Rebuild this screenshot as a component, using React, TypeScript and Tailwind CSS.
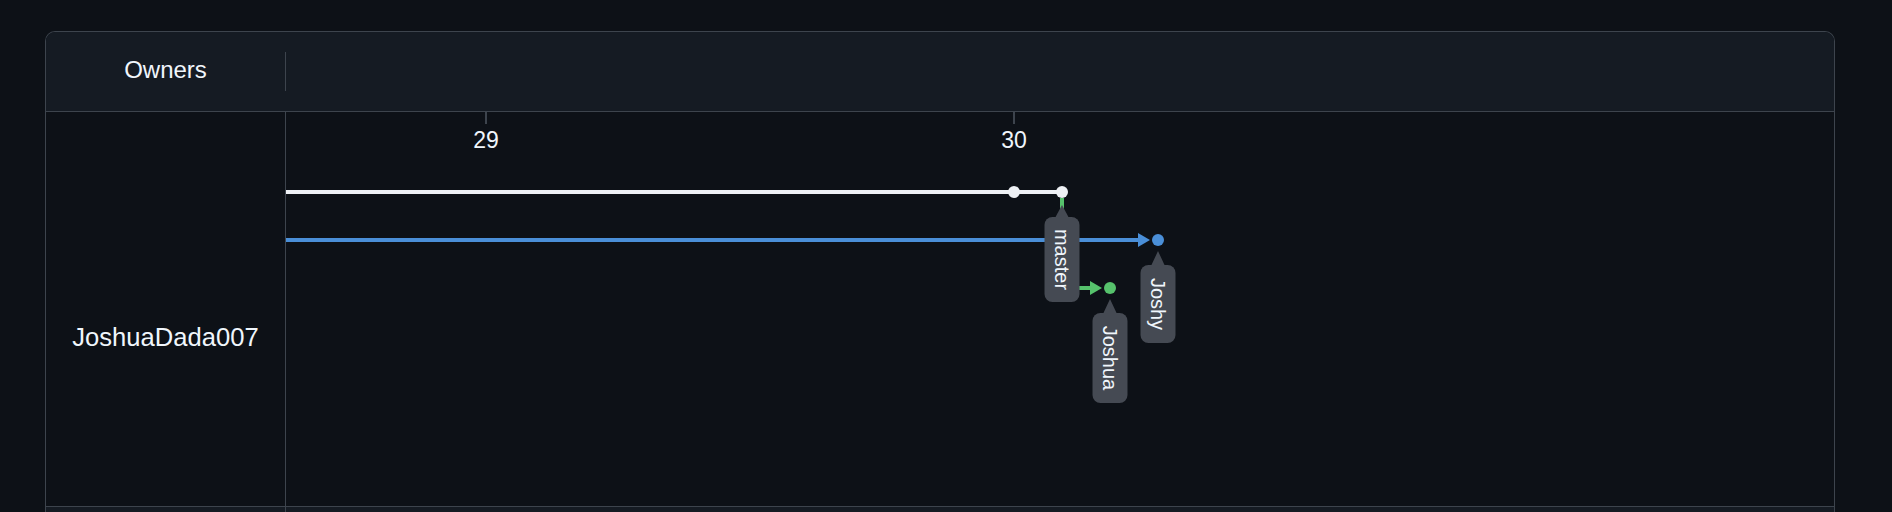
import React from 'react';

type Commit = { x: number; y: number; color: string };
type Tag = { x: number; tip: number; top: number; bottom: number; label: string };

const ticks = [
    { x: 200, label: '29' },
    { x: 728, label: '30' },
];

const commits: Commit[] = [
    { x: 728, y: 80, color: '#eef1f5' },
    { x: 776, y: 80, color: '#eef1f5' },
    { x: 872, y: 128, color: '#4a8fd8' },
    { x: 824, y: 176, color: '#56c26c' },
];

const tags: Tag[] = [
    { x: 776, tip: 93, top: 105, bottom: 190, label: 'master' },
    { x: 872, tip: 139, top: 153, bottom: 231, label: 'Joshy' },
    { x: 824, tip: 187, top: 201, bottom: 291, label: 'Joshua' },
];

const BranchChart = () => {
    return (
        <svg className="block h-[394px] w-full" style={{ fontFamily: '"Liberation Sans", Arial, sans-serif' }}>
            {ticks.map((t) => (
                <g key={t.label}>
                    <line x1={t.x} y1={0} x2={t.x} y2={12} stroke="#3d444d" strokeWidth={2} />
                    <text x={t.x} y={36} textAnchor="middle" fontSize={23} fill="#f0f6fc">
                        {t.label}
                    </text>
                </g>
            ))}

            {/* branch lines */}
            <line x1={0} y1={80} x2={776} y2={80} stroke="#eef1f5" strokeWidth={4} />
            <line x1={0} y1={128} x2={853} y2={128} stroke="#4a8fd8" strokeWidth={4} />
            <polygon points="852,121 864,128 852,135" fill="#4a8fd8" />
            <polyline points="776,86 776,176 805,176" fill="none" stroke="#56c26c" strokeWidth={4} />
            <polygon points="804,169 816,176 804,183" fill="#56c26c" />

            {commits.map((c, i) => (
                <circle key={i} cx={c.x} cy={c.y} r={6} fill={c.color} />
            ))}

            {/* branch tags */}
            {tags.map((t) => (
                <g key={t.label}>
                    <polygon points={`${t.x},${t.tip} ${t.x - 7},${t.top + 1} ${t.x + 7},${t.top + 1}`} fill="#454a53" />
                    <rect x={t.x - 17.5} y={t.top} width={35} height={t.bottom - t.top} rx={8} fill="#454a53" />
                    <text
                        x={0}
                        y={0}
                        transform={`translate(${t.x - 7},${(t.top + t.bottom) / 2}) rotate(90)`}
                        textAnchor="middle"
                        fontSize={20}
                        fill="#f0f6fc"
                    >
                        {t.label}
                    </text>
                </g>
            ))}
        </svg>
    );
};

export default function App() {
    return (
        <div className="min-h-[512px] bg-[#0d1117] pt-[31px] font-['Liberation_Sans',Arial,sans-serif] text-[#f0f6fc]">
            <div className="ml-[45px] w-[1790px] overflow-hidden rounded-t-[10px] border border-b-0 border-[#3d444d]">
                {/* header */}
                <div className="flex h-[80px] items-center border-b border-[#3d444d] bg-[#151b23]">
                    <div className="flex w-[239px] items-center justify-center pb-[4px] text-[24px]">Owners</div>
                    <div className="h-[39px] w-px bg-[#3d444d]" />
                </div>

                {/* owner row */}
                <div className="flex h-[395px] border-b border-[#3d444d]">
                    <div className="flex w-[240px] shrink-0 items-center justify-center border-r border-[#3d444d] pt-[56px] text-[25.6px]">
                        JoshuaDada007
                    </div>
                    <div className="flex-1">
                        <BranchChart />
                    </div>
                </div>

                <div className="flex h-[40px] bg-[#151b23]">
                    <div className="w-[240px] shrink-0 border-r border-[#3d444d]" />
                </div>
            </div>
        </div>
    );
}
